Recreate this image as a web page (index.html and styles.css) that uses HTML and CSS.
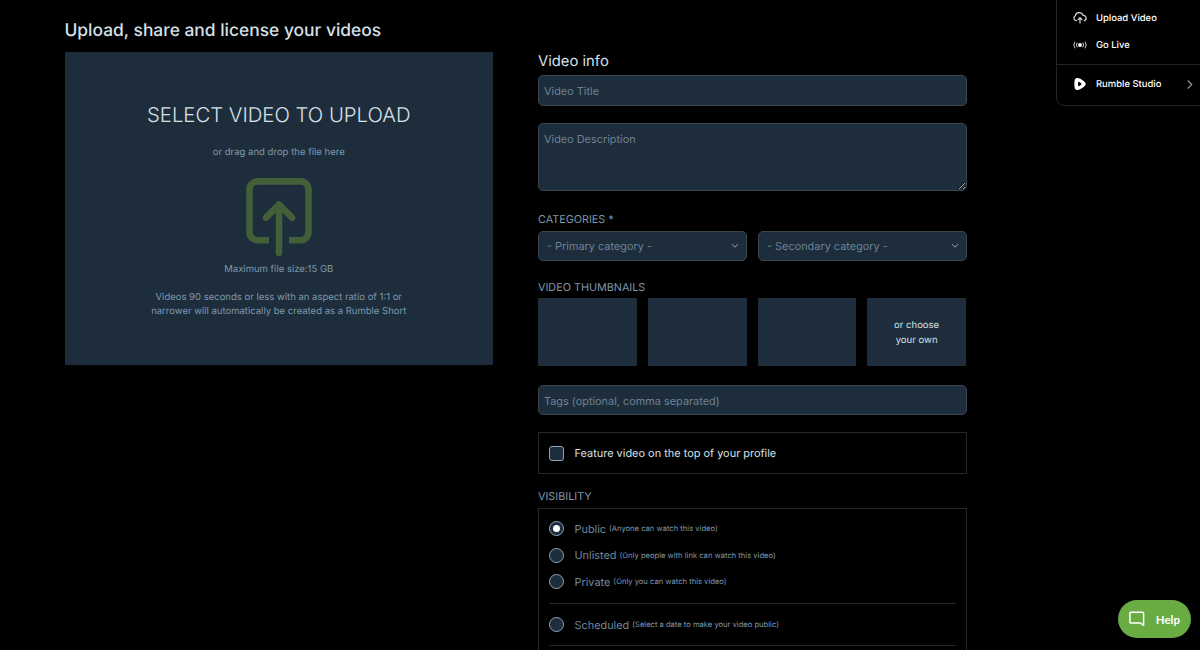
FILE: index.html
```html
<!DOCTYPE html>
<html lang="en">
<head>
<meta charset="utf-8">
<title>Upload video</title>
<link rel="stylesheet" href="styles.css">
</head>
<body>
<main class="page">
  <section class="upload">
    <h1 class="upload-heading">Upload, share and license your videos</h1>
    <div class="dropzone">
      <h2 class="drop-title">SELECT VIDEO TO UPLOAD</h2>
      <p class="drop-hint">or drag and drop the file here</p>
      <svg class="drop-icon" width="68" height="80" viewBox="0 0 68 80" fill="none" stroke="#435f39" stroke-width="6.6">
        <path d="M24 63.200H12.5a8 8 0 0 1-8-8V12.4a8 8 0 0 1 8-8h43a8 8 0 0 1 8 8v42.800a8 8 0 0 1-8 8H44"/>
        <path d="M34 76V28M21 40.6L34 27.600l13 13" stroke-linecap="round" stroke-linejoin="round"/>
      </svg>
      <p class="drop-size">Maximum file size:15 GB</p>
      <p class="drop-note">Videos 90 seconds or less with an aspect ratio of 1:1 or<br>narrower will automatically be created as a Rumble Short</p>
    </div>
  </section>
  <form class="info">
    <h2 class="info-heading">Video info</h2>
    <input class="field title-field" placeholder="Video Title">
    <textarea class="field description" placeholder="Video Description"></textarea>
    <div class="label">CATEGORIES *</div>
    <div class="selects">
      <div class="select"><span>- Primary category -</span><svg width="8" height="6" viewBox="0 0 8 6"><path d="M1 1.2l3 3 3-3"/></svg></div>
      <div class="select"><span>- Secondary category -</span><svg width="8" height="6" viewBox="0 0 8 6"><path d="M1 1.2l3 3 3-3"/></svg></div>
    </div>
    <div class="label thumbs-label">VIDEO THUMBNAILS</div>
    <div class="thumbs">
      <div class="thumb"></div>
      <div class="thumb"></div>
      <div class="thumb"></div>
      <div class="thumb">or choose<br>your own</div>
    </div>
    <input class="field tags" placeholder="Tags (optional, comma separated)">
    <label class="feature"><span class="box"></span>Feature video on the top of your profile</label>
    <div class="label visibility-label">VISIBILITY</div>
    <div class="visibility">
      <label class="option"><span class="radio checked"></span>Public<small>(Anyone can watch this video)</small></label>
      <label class="option"><span class="radio"></span>Unlisted<small>(Only people with link can watch this video)</small></label>
      <label class="option"><span class="radio"></span>Private<small>(Only you can watch this video)</small></label>
      <label class="option scheduled"><span class="radio"></span>Scheduled<small>(Select a date to make your video public)</small></label>
    </div>
  </form>
</main>
<nav class="menu">
  <a class="menu-item">
    <svg width="14" height="14" viewBox="0 0 14 14" fill="none" stroke="#ddd" stroke-width="1.2" stroke-linecap="round" stroke-linejoin="round"><path d="M3.3 9.700A2.700 2.700 0 0 1 2.3 4.700a4 4 0 0 1 7.7-.4 2.800 2.800 0 0 1 1.3 5.400M7 12V6.800M5 8.600l2-2 2 2"/></svg>
    <span>Upload Video</span>
  </a>
  <a class="menu-item">
    <svg width="14" height="14" viewBox="0 0 14 14" fill="none" stroke="#ccc" stroke-width="1" stroke-linecap="round"><circle cx="7" cy="7" r="1.9" fill="#fff" stroke="none"/><path d="M4 5a3.8 3.8 0 0 0 0 4M10 5a3.800 3.800 0 0 1 0 4M1.700 4a5.500 5.500 0 0 0 0 6M12.300 4a5.500 5.500 0 0 1 0 6"/></svg>
    <span>Go Live</span>
  </a>
  <a class="menu-item studio">
    <svg width="14" height="14" viewBox="0 0 14 14"><path fill="#fff" fill-rule="evenodd" d="M1.700 3.1C2.200 1.200 3.700.8 5.700 1.300c2.200.6 4.300 1.900 6 3.600 1.300 1.300 1.300 2.900 0 4.200-1.700 1.700-3.800 3-6 3.600-2 .5-3.500.1-4-1.800-.5-2.500-.5-5.300 0-7.800zM5.200 5.300c-.2 1.100-.2 2.300 0 3.400.2.600.6.700 1.100.4.800-.4 1.400-.9 2-1.500.3-.4.3-.8 0-1.200-.6-.6-1.200-1.100-2-1.500-.5-.3-.9-.2-1.100.4z"/></svg>
    <span>Rumble Studio</span>
    <svg class="chevron" width="6" height="9" viewBox="0 0 6 9" fill="none" stroke="#999" stroke-width="1.1"><path d="M.8.5l4 4-4 4"/></svg>
  </a>
</nav>
<button class="help">
  <svg width="16" height="16" viewBox="0 0 16 16" fill="none" stroke="#fff" stroke-width="1.5" stroke-linejoin="round"><path d="M2 1.200h11.500a1.100 1.100 0 0 1 1.100 1.100v12L11.300 12H2a1.100 1.100 0 0 1-1.100-1.100V2.300A1.100 1.100 0 0 1 2 1.200z"/></svg>
  <span>Help</span>
</button>
</body>
</html>
```
FILE: styles.css
```css
* { box-sizing: border-box; }
body {
  margin: 0;
  background: #000;
  color: #7f98ac;
  font-family: Inter, "Liberation Sans", sans-serif;
  text-rendering: geometricPrecision;
}
h1, h2, p { margin: 0; font-weight: 400; white-space: nowrap; }
.page { height: 650px; overflow: hidden; display: grid; grid-template-columns: 428.5px 428.5px; column-gap: 45px; padding-left: 64.5px; }
.upload { padding-top: 18px; }
.upload-heading { height: 34px; line-height: 26px; font-size: 17.4px; font-weight: 500; color: #d6e0e8; }
.dropzone { height: 313px; padding-top: 47px; background: #1e2d3b; display: flex; flex-direction: column; align-items: center; text-align: center; }
.drop-title { line-height: 32px; font-size: 20.3px; font-weight: 300; color: #d6e0e8; }
.drop-hint { margin-top: 15px; line-height: 14px; font-size: 9.55px; }
.drop-icon { margin-top: 17px; flex: none; }
.drop-size { margin-top: 6px; line-height: 14px; font-size: 9.5px; }
.drop-note { margin-top: 14px; line-height: 14.2px; font-size: 9.5px; }
.info { padding-top: 48px; display: flex; flex-direction: column; }
.info-heading { height: 27px; line-height: 26px; font-size: 14.8px; color: #d6e0e8; }
.field {
  display: block; width: 100%; padding: 1px 5px 0; border: 1px solid #3b474f; border-radius: 5px;
  background: #1e2d3b; color: #d6e0e8; font: 10.9px Inter, "Liberation Sans", sans-serif; outline: none; flex: none;
}
.field::placeholder { color: #6b8295; opacity: 1; }
.title-field, .tags { height: 30.500px; }
.tags { padding-top: 2px; }
.description { height: 68px; margin-top: 17px; padding-top: 8px; resize: vertical; }
.label { height: 14px; margin-top: 21.500px; line-height: 15px; font-size: 10.8px; }
.selects { display: grid; grid-template-columns: 1fr 1fr; gap: 11.500px; margin-top: 5px; }
.select { height: 30px; padding: 0 7px 0 8px; display: flex; align-items: center; justify-content: space-between; border: 1px solid #3b474f; border-radius: 5px; background: #1e2d3b; color: #6b8295; font-size: 10.9px; }
.select path { fill: none; stroke: #9aa9b5; stroke-width: 1; }
.thumbs-label { margin-top: 18.500px; }
.thumbs { display: grid; grid-template-columns: repeat(4, 1fr); gap: 11px; margin-top: 4.500px; padding-right: .500px; }
.thumb { height: 68px; padding-top: 3px; display: flex; align-items: center; justify-content: center; text-align: center; background: #1e2d3b; color: #d6e0e8; font-size: 9.55px; line-height: 14.300px; }
.tags { margin-top: 18.500px; }
.feature { height: 42px; margin-top: 17px; padding-left: 10px; display: flex; align-items: center; gap: 10.500px; border: 1px solid #22282c; color: #d6e0e8; font-size: 10.95px; }
.box { width: 15px; height: 15px; border: 1px solid #8fa3b3; border-radius: 3px; background: #1e2d3b; }
.visibility-label { margin-top: 14.500px; }
.visibility { height: 180px; margin-top: 5px; padding: 7px 10px 0; border: 1px solid #22282c; }
.option { height: 26.500px; display: flex; align-items: center; color: #72899c; font-size: 10.9px; }
.option small { margin: 0 0 0 3px; color: #7f98ac; font-size: 7.600px; }
.radio { width: 15px; height: 15px; margin-right: 10.500px; display: grid; place-items: center; border: 1.500px solid #8fa3b3; border-radius: 50%; background: #1e2d3b; }
.checked::after { content: ""; width: 7px; height: 7px; border-radius: 50%; background: #fff; }
.scheduled { height: 43px; margin-top: 8px; border: solid #22282c; border-width: 1px 0; }
.menu { position: absolute; top: -8px; right: -8px; width: 152px; height: 114px; padding-top: 11px; border: 1px solid #242424; border-radius: 8px; color: #fff; font-size: 9.45px; font-weight: 500; }
.menu-item { height: 27px; padding-left: 16px; display: flex; align-items: center; gap: 9px; }
.menu-item:not(.studio) span { padding-top: 2px; }
.studio { height: 39px; margin-top: 6px; padding-right: 14px; border-top: 1px solid #242424; }
.chevron { margin-left: auto; }
.help { position: absolute; left: 1118px; top: 600px; width: 73px; height: 38px; padding: 0 11px 0 11px; display: flex; align-items: center; justify-content: space-between; border: 0; border-radius: 19px; background: #68ac42; color: #fff; font: 700 11.500px Lato, sans-serif; }
```
